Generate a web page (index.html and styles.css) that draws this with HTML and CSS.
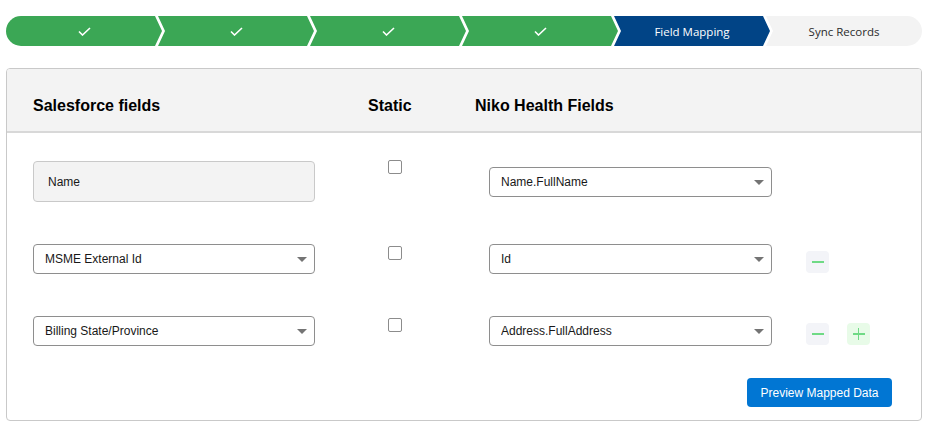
FILE: index.html
```html
<!DOCTYPE html>
<html lang="en">
<head>
    <meta charset="UTF-8">
    <meta name="viewport" content="width=device-width, initial-scale=1.0">
    <title>Field Mapping</title>
    <link rel="stylesheet" href="styles.css">
</head>
<body>
    <div class="page">
        <ol class="path">
            <li class="step step-done"><svg class="tick" width="13" height="9" viewBox="0 0 13 9"><polyline points="1,4.5 4.5,8 12,1"/></svg></li>
            <li class="step step-done"><svg class="tick" width="13" height="9" viewBox="0 0 13 9"><polyline points="1,4.5 4.5,8 12,1"/></svg></li>
            <li class="step step-done"><svg class="tick" width="13" height="9" viewBox="0 0 13 9"><polyline points="1,4.5 4.5,8 12,1"/></svg></li>
            <li class="step step-done"><svg class="tick" width="13" height="9" viewBox="0 0 13 9"><polyline points="1,4.5 4.5,8 12,1"/></svg></li>
            <li class="step step-current">Field Mapping</li>
            <li class="step step-todo">Sync Records</li>
        </ol>

        <div class="card">
            <div class="card-head">
                <span class="head-sf">Salesforce fields</span>
                <span class="head-static">Static</span>
                <span>Niko Health Fields</span>
            </div>

            <div class="card-body">
                <div class="map-row map-row-fixed">
                    <div class="field-fixed">Name</div>
                    <div class="static-cell"><input type="checkbox" class="check"></div>
                    <div class="select-wrap">
                        <select class="select">
                            <option>Name.FullName</option>
                        </select>
                    </div>
                    <div class="actions"></div>
                </div>

                <div class="map-row">
                    <div class="select-wrap">
                        <select class="select">
                            <option>MSME External Id</option>
                        </select>
                    </div>
                    <div class="static-cell"><input type="checkbox" class="check"></div>
                    <div class="select-wrap">
                        <select class="select">
                            <option>Id</option>
                        </select>
                    </div>
                    <div class="actions">
                        <button class="icon-btn icon-remove" title="Remove"><span class="bar"></span></button>
                    </div>
                </div>

                <div class="map-row">
                    <div class="select-wrap">
                        <select class="select">
                            <option>Billing State/Province</option>
                        </select>
                    </div>
                    <div class="static-cell"><input type="checkbox" class="check"></div>
                    <div class="select-wrap">
                        <select class="select">
                            <option>Address.FullAddress</option>
                        </select>
                    </div>
                    <div class="actions">
                        <button class="icon-btn icon-remove" title="Remove"><span class="bar"></span></button>
                        <button class="icon-btn icon-add" title="Add"><span class="bar"></span><span class="bar bar-v"></span></button>
                    </div>
                </div>

                <div class="card-foot">
                    <button class="btn-preview">Preview Mapped Data</button>
                </div>
            </div>
        </div>
    </div>
</body>
</html>
```

FILE: styles.css
```css
body {
    margin: 0;
    font-family: "Liberation Sans", Arial, sans-serif;
    background-color: #fff;
    color: #181818;
}

.page {
    padding: 16px 17px 0 6px;
}

/* progress path */

.path {
    display: flex;
    list-style: none;
    margin: 0;
    padding: 0;
    height: 30px;
}

.step {
    flex: 1;
    display: flex;
    justify-content: center;
    align-items: center;
    margin-left: -4px;
    font-family: "Open Sans", sans-serif;
    font-size: 11.5px;
    clip-path: polygon(0 0, calc(100% - 7px) 0, 100% 50%, calc(100% - 7px) 100%, 0 100%, 7px 50%);
}

.step:first-child {
    margin-left: 0;
    border-radius: 15px 0 0 15px;
    clip-path: polygon(0 0, calc(100% - 7px) 0, 100% 50%, calc(100% - 7px) 100%, 0 100%);
}

.step:last-child {
    border-radius: 0 15px 15px 0;
    clip-path: polygon(0 0, 100% 0, 100% 100%, 0 100%, 7px 50%);
}

.step-done {
    background-color: #3ba755;
}

.step-current {
    background-color: #014486;
    color: #fff;
}

.step-todo {
    background-color: #f3f3f3;
    color: #2b2b2b;
}

.tick {
    fill: none;
    stroke: #fff;
    stroke-width: 1.6;
    margin-top: 1px;
}

/* mapping card */

.card {
    margin-top: 22px;
    border: 1px solid #c9c9c9;
    border-radius: 4px;
    overflow: hidden;
}

.card-head {
    display: flex;
    background-color: #f3f3f3;
    border-bottom: 2px solid #d8d8d8;
    padding: 28px 26px 16px;
    font-size: 16px;
    line-height: 18px;
    font-weight: bold;
    color: #000;
}

.head-sf {
    width: 335px;
}

.head-static {
    width: 107px;
}

.card-body {
    display: flex;
    flex-direction: column;
    gap: 42px;
    padding: 28px 29px 13px 26px;
}

.map-row {
    display: grid;
    grid-template-columns: 282px 174px 283px auto;
    align-items: start;
}

.map-row-fixed {
    align-items: center;
}

.field-fixed {
    height: 39px;
    display: flex;
    align-items: center;
    padding-left: 14px;
    background-color: #f3f3f3;
    border: 1px solid #c9c9c9;
    border-radius: 4px;
    font-size: 12px;
}

.select-wrap {
    position: relative;
}

.select-wrap::after {
    content: "";
    position: absolute;
    right: 8px;
    top: 13px;
    border-left: 5px solid transparent;
    border-right: 5px solid transparent;
    border-top: 5px solid #747474;
    pointer-events: none;
}

.select {
    appearance: none;
    width: 100%;
    height: 30px;
    padding: 0 24px 0 11px;
    border: 1px solid #8e8e8e;
    border-radius: 4px;
    background-color: #fff;
    font-family: inherit;
    font-size: 12px;
    color: #181818;
}

.static-cell {
    padding-left: 73px;
    align-self: start;
}

.check {
    appearance: none;
    display: block;
    width: 14px;
    height: 14px;
    margin: 2px 0 0;
    border: 1px solid #8c8c8c;
    border-radius: 2px;
    background-color: #fff;
}

.map-row-fixed .check {
    margin-top: -1px;
}

.actions {
    display: flex;
    gap: 18px;
    padding-left: 34px;
    margin-top: 7px;
}

.icon-btn {
    position: relative;
    width: 23px;
    height: 22px;
    padding: 0;
    border: none;
    border-radius: 4px;
    cursor: pointer;
}

.icon-remove {
    background-color: #f3f4f8;
}

.icon-add {
    background-color: #e8fbe8;
}

.icon-btn .bar {
    position: absolute;
    left: 5.5px;
    top: 10px;
    width: 12px;
    height: 1.5px;
    background-color: #6fda85;
}

.icon-btn .bar-v {
    left: 10.75px;
    top: 5px;
    width: 1.5px;
    height: 12px;
}

.card-foot {
    display: flex;
    justify-content: flex-end;
    margin-top: -10px;
}

.btn-preview {
    width: 145px;
    height: 29px;
    border: none;
    border-radius: 4px;
    background-color: #0176d3;
    color: #fff;
    font-family: inherit;
    font-size: 12px;
    cursor: pointer;
}
```
